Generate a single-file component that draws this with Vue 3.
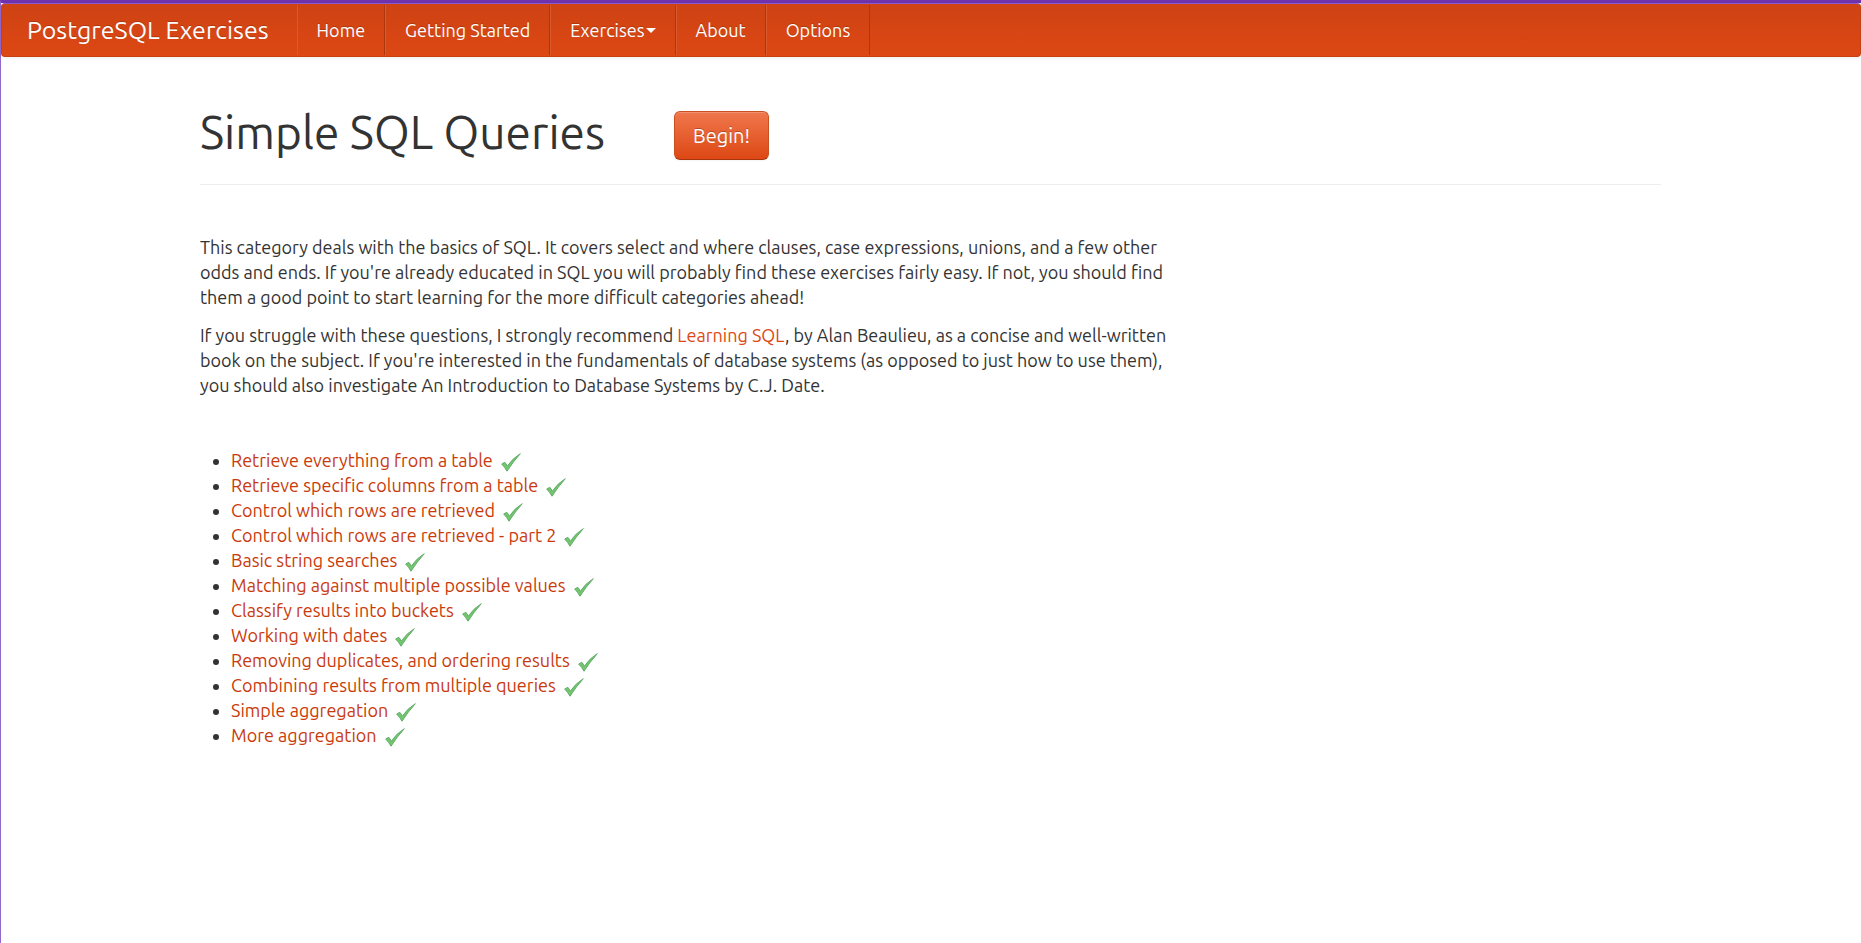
<script setup>
const links = [
  { label: 'Home' },
  { label: 'Getting Started' },
  { label: 'Exercises', menu: true },
  { label: 'About' },
  { label: 'Options' },
]

const exercises = [
  'Retrieve everything from a table',
  'Retrieve specific columns from a table',
  'Control which rows are retrieved',
  'Control which rows are retrieved - part 2',
  'Basic string searches',
  'Matching against multiple possible values',
  'Classify results into buckets',
  'Working with dates',
  'Removing duplicates, and ordering results',
  'Combining results from multiple queries',
  'Simple aggregation',
  'More aggregation',
]
</script>

<template>
  <div class="page">
    <nav class="navbar" aria-label="Main">
      <a class="brand" href="#">PostgreSQL Exercises</a>
      <ul class="nav">
        <li v-for="link in links" :key="link.label">
          <a href="#">{{ link.label }}<span v-if="link.menu" class="caret"></span></a>
        </li>
      </ul>
    </nav>

    <main class="content">
      <header class="heading">
        <h1>Simple SQL Queries</h1>
        <button type="button" class="begin">Begin!</button>
      </header>

      <section class="intro">
        <p>
          This category deals with the basics of SQL. It covers select and where clauses, case
          expressions, unions, and a few other odds and ends. If you're already educated in SQL you
          will probably find these exercises fairly easy. If not, you should find them a good point
          to start learning for the more difficult categories ahead!
        </p>
        <p>
          If you struggle with these questions, I strongly recommend
          <a href="#">Learning SQL</a>, by Alan Beaulieu, as a concise and well-written book on the
          subject. If you're interested in the fundamentals of database systems (as opposed to just
          how to use them), you should also investigate An Introduction to Database Systems by C.J.
          Date.
        </p>
      </section>

      <ul class="exercises">
        <li v-for="name in exercises" :key="name">
          <a href="#">{{ name }}</a>
          <svg class="tick" viewBox="0 0 20 20" role="img" aria-label="Completed">
            <path
              d="M.7 11 3.800 9.300Q5.400 11 6.300 13.200 11.500 5.300 19.300.7 12 8.800 6 18.200 4 14.400.7 11Z"
              fill="#74c66c"
              stroke="#62ad6e"
              stroke-width="1"
              stroke-linejoin="round"
            />
          </svg>
        </li>
      </ul>
    </main>
  </div>
</template>

<style>
body {
  margin: 0;
  background: #fff;
}
</style>

<style scoped>
.page {
  box-sizing: border-box;
  min-height: 100vh;
  border-top: 3px solid #7033ae;
  border-left: 1px solid #9668cb;
  color: #333;
  font-family: Ubuntu, "Noto Sans", sans-serif;
  font-size: 18px;
  line-height: 25px;
}

a {
  color: #dd4814;
  text-decoration: none;
}

.navbar {
  display: flex;
  box-sizing: border-box;
  height: 54px;
  border: 1px solid #c64012;
  border-top-color: #8a5bca;
  border-radius: 4px;
  background: linear-gradient(#ce4213, #dd4814);
  box-shadow: 0 1px 4px rgba(0, 0, 0, 0.07);
}

.navbar a {
  color: #fff;
  text-shadow: 0 -1px 0 rgba(0, 0, 0, 0.2);
}

.navbar .brand {
  padding: 14px 28px 14px 25px;
  font-size: 25px;
}

.nav {
  display: flex;
  margin: 1px 0;
  padding: 0;
  list-style: none;
  border-left: 1px solid #d85a31;
}

.nav li {
  display: flex;
  border-right: 1px solid #ac3810;
}

.nav li + li {
  border-left: 1px solid #d85a31;
}

.nav a {
  display: flex;
  align-items: center;
  padding: 0 19px;
}

.caret {
  margin-left: 1px;
  border: 5px solid transparent;
  border-top-color: #fff;
  border-bottom: 0;
}

.content {
  margin: 0 200px 0 199px;
}

.heading {
  display: flex;
  align-items: flex-start;
  gap: 69px;
  padding: 54px 0 24px;
  border-bottom: 1px solid #eee;
}

h1 {
  margin: 0;
  font-size: 46px;
  font-weight: 400;
  line-height: 42px;
}

.begin {
  height: 49px;
  padding: 0 18px;
  border: 1px solid #c9501f;
  border-bottom-color: #a7350d;
  border-radius: 6px;
  background: linear-gradient(#f0774d, #dd4814);
  box-shadow: inset 0 1px 0 rgba(255, 255, 255, 0.2), 0 1px 2px rgba(0, 0, 0, 0.05);
  color: #fff;
  font: inherit;
  font-size: 20px;
  text-shadow: 0 -1px 0 rgba(0, 0, 0, 0.25);
}

.intro {
  max-width: 976px;
  padding-top: 50px;
}

.intro p {
  margin: 0 0 13px;
}

.exercises {
  margin: 50px 0 0;
  padding-left: 31px;
}

.exercises a {
  color: #c93a0b;
}

.tick {
  width: 20px;
  height: 20px;
  margin-left: 8px;
  vertical-align: -6px;
}
</style>
